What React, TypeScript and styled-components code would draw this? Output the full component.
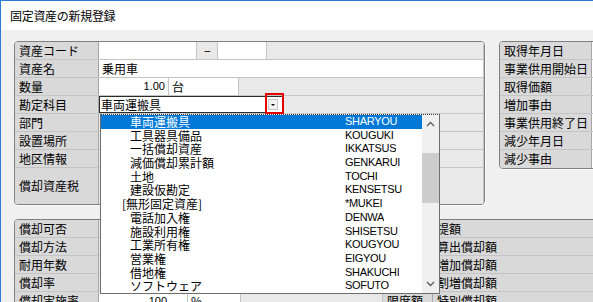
import styled, { createGlobalStyle } from "styled-components";

const GlobalStyle = createGlobalStyle`
  html, body { margin: 0; padding: 0; }
  body {
    width: 593px;
    height: 302px;
    overflow: hidden;
    background: #f0f0f0;
    font-family: "Noto Sans CJK JP", "Liberation Sans", sans-serif;
    font-size: 12px;
    color: #000;
  }
`;

const Window = styled.div`
  position: relative;
  width: 593px;
  height: 302px;
  box-sizing: border-box;
  border-left: 1px solid #2a7bd6;
  display: flex;
  flex-direction: column;
  overflow: hidden;
`;

const TitleBar = styled.div`
  height: 30px;
  flex-shrink: 0;
  box-sizing: border-box;
  background: #fff;
  border-top: 1px solid #2a7bd6;
  display: flex;
  align-items: center;
  padding-left: 9px;
  font-size: 12px;
  line-height: 1;
  letter-spacing: -0.3px;
`;

const Body = styled.div`
  position: relative;
  flex: 1;
  background: #f0f0f0;
  padding: 11px 0 0 13px;
`;

const TopRow = styled.div`
  display: flex;
  align-items: flex-start;
  gap: 14px;
`;

const Panel = styled.div<{ $w: number; $mt?: number }>`
  flex-shrink: 0;
  width: ${p => p.$w}px;
  margin-top: ${p => p.$mt ?? 0}px;
  box-sizing: border-box;
  background: #e9e9e9;
  border: 1px solid #7f7f7f;
  border-radius: 4px;
  overflow: hidden;
  box-shadow: 1px 1px 0 #fcfcfc;
`;

const Row = styled.div<{ $h?: number }>`
  display: flex;
  height: ${p => p.$h ?? 18}px;
  box-sizing: border-box;
  border-bottom: 1px solid #c4c4c4;
  &:last-child { border-bottom: none; }
`;

const Label = styled.div<{ $w?: number }>`
  ${p => (p.$w ? `width: ${p.$w}px; flex: 0 0 auto;` : "flex: 1;")}
  box-sizing: border-box;
  background: #d9d9d9;
  border-right: 1px solid #a6a6a6;
  padding-left: 4px;
  display: flex;
  align-items: center;
  line-height: 1;
  white-space: nowrap;
  overflow: hidden;
`;

const Cell = styled.div<{ $w?: number; $white?: boolean; $right?: boolean; $pad?: number }>`
  ${p => (p.$w ? `width: ${p.$w}px; flex: 0 0 auto;` : "flex: 1;")}
  box-sizing: border-box;
  background: ${p => (p.$white ? "#fff" : "#e9e9e9")};
  border-right: 1px solid #c4c4c4;
  display: flex;
  align-items: center;
  justify-content: ${p => (p.$right ? "flex-end" : "flex-start")};
  padding: ${p => (p.$right ? `0 ${p.$pad ?? 3}px 0 0` : `0 0 0 ${p.$pad ?? 3}px`)};
  line-height: 1;
  white-space: nowrap;
  overflow: hidden;
`;

const Num = styled.span`
  font-family: "Liberation Sans", sans-serif;
  font-size: 11px;
`;

const Combo = styled.div`
  position: relative;
  width: 184px;
  flex-shrink: 0;
  box-sizing: border-box;
  background: #fff;
  border: 1px solid #2b2b2b;
  display: flex;
  align-items: center;
  padding-left: 1px;
  line-height: 1;
`;

const DropButton = styled.div`
  position: absolute;
  right: 4px;
  top: 2px;
  width: 10px;
  height: 11px;
  box-sizing: border-box;
  background: #f3f3f3;
  border: 1px solid #c8c8c8;
  display: flex;
  align-items: center;
  justify-content: center;
  &::after {
    content: "";
    border-left: 2px solid transparent;
    border-right: 2px solid transparent;
    border-top: 2px solid #000;
  }
`;

const Highlight = styled.div`
  position: absolute;
  left: 165px;
  top: -4px;
  width: 19px;
  height: 21px;
  box-sizing: border-box;
  border: 2px solid #e40000;
`;

const List = styled.div`
  position: absolute;
  left: 99px;
  top: 84px;
  width: 340px;
  box-sizing: border-box;
  background: #fff;
  border: 1px solid #6e6e6e;
  border-top: 1px dotted #333;
  display: flex;
  z-index: 5;
`;

const Items = styled.div`
  flex: 1;
`;

const Item = styled.div<{ $active?: boolean }>`
  height: 13.7px;
  display: flex;
  overflow: hidden;
  white-space: nowrap;
  background: ${p => (p.$active ? "#0078d7" : "transparent")};
  color: ${p => (p.$active ? "#fff" : "#000")};
`;

const ItemName = styled.div<{ $indent: number }>`
  width: 244px;
  height: 13.7px;
  line-height: 13.7px;
  flex-shrink: 0;
  box-sizing: border-box;
  padding-left: ${p => p.$indent}px;
  overflow: hidden;
`;

const ItemCode = styled.div`
  height: 13.7px;
  line-height: 13.7px;
  overflow: hidden;
  font-family: "Liberation Sans", sans-serif;
  font-size: 11px;
  letter-spacing: -0.3px;
`;

const Scrollbar = styled.div`
  width: 17px;
  background: #f0f0f0;
  display: flex;
  flex-direction: column;
`;

const ScrollArrow = styled.div`
  height: 17px;
  display: flex;
  align-items: center;
  justify-content: center;
`;

const Track = styled.div`
  flex: 1;
`;

const Thumb = styled.div`
  margin-top: 21px;
  height: 50px;
  background: #cdcdcd;
`;

const Chevron = ({ up }: { up?: boolean }) => (
  <svg width="9" height="6" viewBox="0 0 9 6">
    <path
      d={up ? "M1 5 4.5 1.5 8 5" : "M1 1 4.5 4.5 8 1"}
      fill="none"
      stroke="#606060"
      strokeWidth="1.4"
    />
  </svg>
);

const accounts: [string, string, number][] = [
  ["車両運搬具", "SHARYOU", 29],
  ["工具器具備品", "KOUGUKI", 29],
  ["一括償却資産", "IKKATSUS", 29],
  ["減価償却累計額", "GENKARUI", 29],
  ["土地", "TOCHI", 29],
  ["建設仮勘定", "KENSETSU", 29],
  ["[無形固定資産]", "*MUKEI", 21],
  ["電話加入権", "DENWA", 29],
  ["施設利用権", "SHISETSU", 29],
  ["工業所有権", "KOUGYOU", 29],
  ["営業権", "EIGYOU", 29],
  ["借地権", "SHAKUCHI", 29],
  ["ソフトウェア", "SOFUTO", 29],
];

const rightLabels = ["取得年月日", "事業供用開始日", "取得価額", "増加事由", "事業供用終了日", "減少年月日", "減少事由"];

const bottomRows: [string, string][] = [
  ["償却可否", "提額"],
  ["償却方法", "算出償却額"],
  ["耐用年数", "増加償却額"],
  ["償却率", "割増償却額"],
];

export default function App() {
  return (
    <>
      <GlobalStyle />
      <Window>
        <TitleBar>固定資産の新規登録</TitleBar>
        <Body>
          <TopRow>
            <Panel $w={471}>
              <Row>
                <Label $w={84}>資産コード</Label>
                <Cell $w={98} $white />
                <Cell $w={21} $pad={7}>−</Cell>
                <Cell $w={49} $white />
                <Cell />
              </Row>
              <Row>
                <Label $w={84}>資産名</Label>
                <Cell $white>乗用車</Cell>
              </Row>
              <Row>
                <Label $w={84}>数量</Label>
                <Cell $w={70} $white $right><Num>1.00</Num></Cell>
                <Cell $w={70} $white>台</Cell>
                <Cell />
              </Row>
              <Row>
                <Label $w={84}>勘定科目</Label>
                <Combo>
                  車両運搬具
                  <DropButton />
                  <Highlight />
                </Combo>
                <Cell />
              </Row>
              <Row>
                <Label $w={84}>部門</Label>
                <Cell />
              </Row>
              <Row>
                <Label $w={84}>設置場所</Label>
                <Cell />
              </Row>
              <Row>
                <Label $w={84}>地区情報</Label>
                <Cell />
              </Row>
              <Row $h={36}>
                <Label $w={84}>償却資産税</Label>
                <Cell />
              </Row>
            </Panel>
            <Panel $w={130}>
              {rightLabels.map(l => (
                <Row key={l}>
                  <Label $w={92}>{l}</Label>
                  <Cell $white />
                </Row>
              ))}
            </Panel>
          </TopRow>
          <Panel $w={600} $mt={14}>
            {bottomRows.map(([l, r]) => (
              <Row key={l}>
                <Label $w={84}>{l}</Label>
                <Cell $w={284} />
                <Label $w={50} />
                <Label>{r}</Label>
              </Row>
            ))}
            <Row>
              <Label $w={84}>償却実施率</Label>
              <Cell $w={89} $white $right $pad={20}><Num>100</Num></Cell>
              <Cell $w={53} $white>%</Cell>
              <Cell $w={142} />
              <Label $w={50}>限度額</Label>
              <Label>特別償却額</Label>
            </Row>
          </Panel>
          <List>
            <Items>
              {accounts.map(([name, code, indent], i) => (
                <Item key={code} $active={i === 0}>
                  <ItemName $indent={indent}>{name}</ItemName>
                  <ItemCode>{code}</ItemCode>
                </Item>
              ))}
            </Items>
            <Scrollbar>
              <ScrollArrow><Chevron up /></ScrollArrow>
              <Track><Thumb /></Track>
              <ScrollArrow><Chevron /></ScrollArrow>
            </Scrollbar>
          </List>
        </Body>
      </Window>
    </>
  );
}
